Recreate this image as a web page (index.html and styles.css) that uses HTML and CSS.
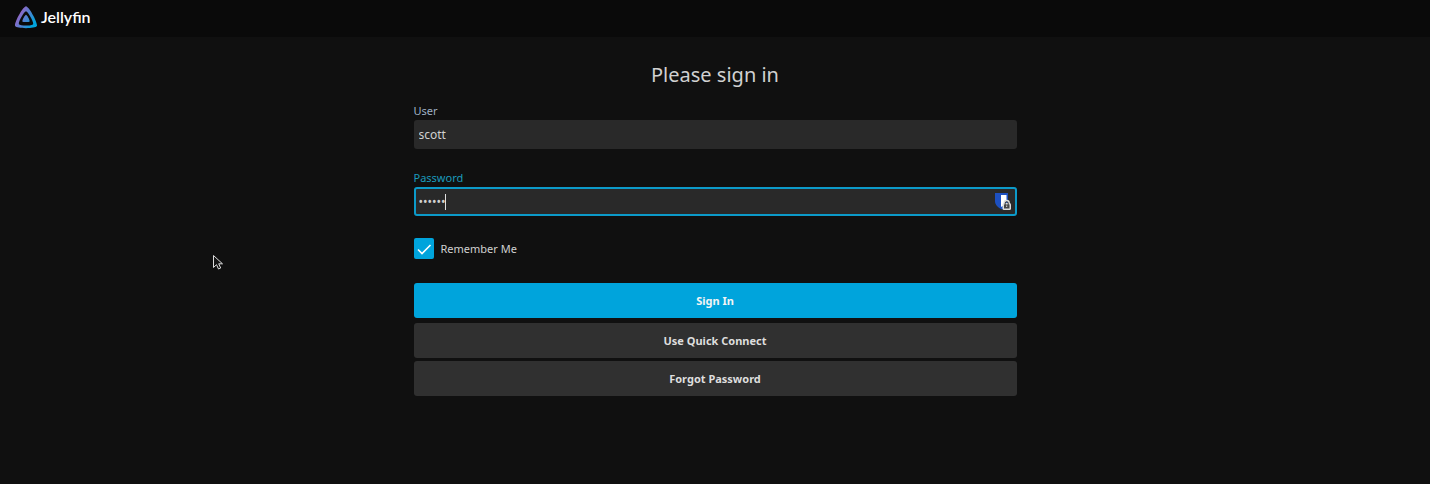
FILE: index.html
```html
<!DOCTYPE html>
<html lang="en">
<head>
<meta charset="utf-8">
<title>Jellyfin</title>
<link rel="stylesheet" href="styles.css">
</head>
<body>
<header class="header">
  <a class="brand" href="#">
    <svg class="brand-mark" viewBox="1 0 22 23" aria-hidden="true">
      <defs>
        <linearGradient id="brand-gradient" x1="3" y1="7" x2="20" y2="17" gradientUnits="userSpaceOnUse">
          <stop offset="0" stop-color="#aa5cc3"/>
          <stop offset="1" stop-color="#00a4dc"/>
        </linearGradient>
      </defs>
      <path fill="url(#brand-gradient)" d="M12 9.400c-.9 0-3.900 5.400-3.500 6.300.4.9 6.500.9 7 0C15.900 14.800 12.900 9.400 12 9.400z"/>
      <path fill="url(#brand-gradient)" fill-rule="evenodd" d="M12 1.200C9.200 1.200.2 17.500 1.600 20.200c1.300 2.700 19.500 2.700 20.800 0C23.800 17.500 14.800 1.200 12 1.200zm6.800 17.200c-.8 1.700-12.700 1.700-13.600 0C4.300 16.600 10.200 6 12 6s7.700 10.600 6.800 12.400z"/>
    </svg>
    <span class="brand-name">Jellyfin</span>
  </a>
</header>
<main class="page">
  <form class="login">
    <h1 class="title">Please sign in</h1>
    <div class="field">
      <label class="label" for="user">User</label>
      <input class="input" id="user" type="text" value="scott">
    </div>
    <div class="field">
      <label class="label label-active" for="password">Password</label>
      <div class="input-wrap">
        <input class="input input-active" id="password" type="password" value="secret">
        <span class="caret"></span>
        <svg class="vault" viewBox="0 0 18 20" aria-hidden="true">
          <path fill="#1d50c0" d="M1 1h13v8c0 4-3 6.500-6 8.500C4 15.500 1 13 1 9z"/>
          <path fill="#fff" d="M7 3h5.500v6c0 2.500-2.500 4.500-5.500 6z"/>
          <path fill="none" stroke="#ddd" stroke-width="2" d="M10.500 12v-1a2.200 2.200 0 0 1 4.400 0v1"/>
          <rect x="8.500" y="11" width="8.500" height="7" rx="1.500" fill="#ddd"/>
          <path fill="none" stroke="#333" d="M11.200 13v-1.800a1.500 1.500 0 0 1 3 0V13"/>
          <rect x="10" y="12.500" width="5.500" height="4" fill="#444"/>
          <path stroke="#ddd" d="M12.700 13.500v1.500"/>
        </svg>
      </div>
    </div>
    <label class="remember">
      <input class="checkbox" type="checkbox" checked>
      <svg class="tick" viewBox="0 0 20 20" aria-hidden="true"><path d="M4 10.500l4 4 8.500-8.500"/></svg>
      <span class="remember-text">Remember Me</span>
    </label>
    <div class="actions">
      <button class="button button-primary" type="submit">Sign In</button>
      <button class="button" type="button">Use Quick Connect</button>
      <button class="button" type="button">Forgot Password</button>
    </div>
  </form>
</main>
<svg class="pointer" viewBox="0 0 12 17" aria-hidden="true">
  <path d="M1.500 1.500v12l3-2.800 2 4.300 2.200-1-2-4.200h3.800z"/>
</svg>
</body>
</html>
```
FILE: styles.css
```css
* { box-sizing: border-box; }
body {
  margin: 0;
  min-height: 100vh;
  background: #101010;
  color: #d1d1d1;
  font: 11px/20px "Noto Sans", sans-serif;
}
.header {
  display: flex;
  align-items: center;
  height: 37px;
  padding: 0 14px 3px;
  background: #0a0a0a;
}
.brand {
  display: flex;
  align-items: center;
  gap: 3px;
  color: #fff;
  text-decoration: none;
}
.brand-mark { width: 24px; height: 24px; }
.brand-name { font: 600 16px/20px Lato, "Noto Sans", sans-serif; }
.page { padding: 21px 16px; }
.login { max-width: 603px; margin: 0 auto; }
.title {
  margin: 0 0 9px;
  font-size: 20px;
  font-weight: 400;
  line-height: 34px;
  text-align: center;
}
.field { margin-bottom: 19px; }
.label { display: block; line-height: 19px; color: #9fb0c4; }
.label-active { color: #1b9bbd; }
.input-wrap { position: relative; }
.input {
  display: block;
  width: 100%;
  height: 29px;
  padding: 0 3px;
  border: 2px solid #292929;
  border-radius: 3px;
  background: #292929;
  color: #d1d1d1;
  font: 12px/20px "Noto Sans", sans-serif;
  outline: none;
}
.input-active { border-color: #0c9ac9; }
.caret {
  position: absolute;
  left: 31px;
  top: 7px;
  width: 1px;
  height: 16px;
  background: #e0e0e0;
}
.vault {
  position: absolute;
  right: 5px;
  top: 5px;
  width: 18px;
  height: 20px;
}
.remember {
  position: relative;
  display: flex;
  align-items: center;
  gap: 7px;
  width: max-content;
  margin-top: 22px;
}
.remember-text { padding-top: 1px; }
.checkbox {
  appearance: none;
  width: 20px;
  height: 21px;
  margin: 0;
  border-radius: 2px;
  background: #00a4dc;
}
.tick {
  position: absolute;
  left: 0;
  width: 20px;
  height: 20px;
  fill: none;
  stroke: #fff;
  stroke-width: 1.6;
}
.actions { display: grid; gap: 3px; margin-top: 24px; }
.button {
  height: 35px;
  border: 0;
  border-radius: 3px;
  background: #303030;
  color: #dedede;
  font: 700 11px/20px "Noto Sans", sans-serif;
}
.button-primary { margin-bottom: 2px; background: #00a4dc; color: #f4f4f4; }
.pointer {
  position: absolute;
  left: 212px;
  top: 254px;
  width: 12px;
  height: 17px;
  fill: #151515;
  stroke: #ddd;
}
```
